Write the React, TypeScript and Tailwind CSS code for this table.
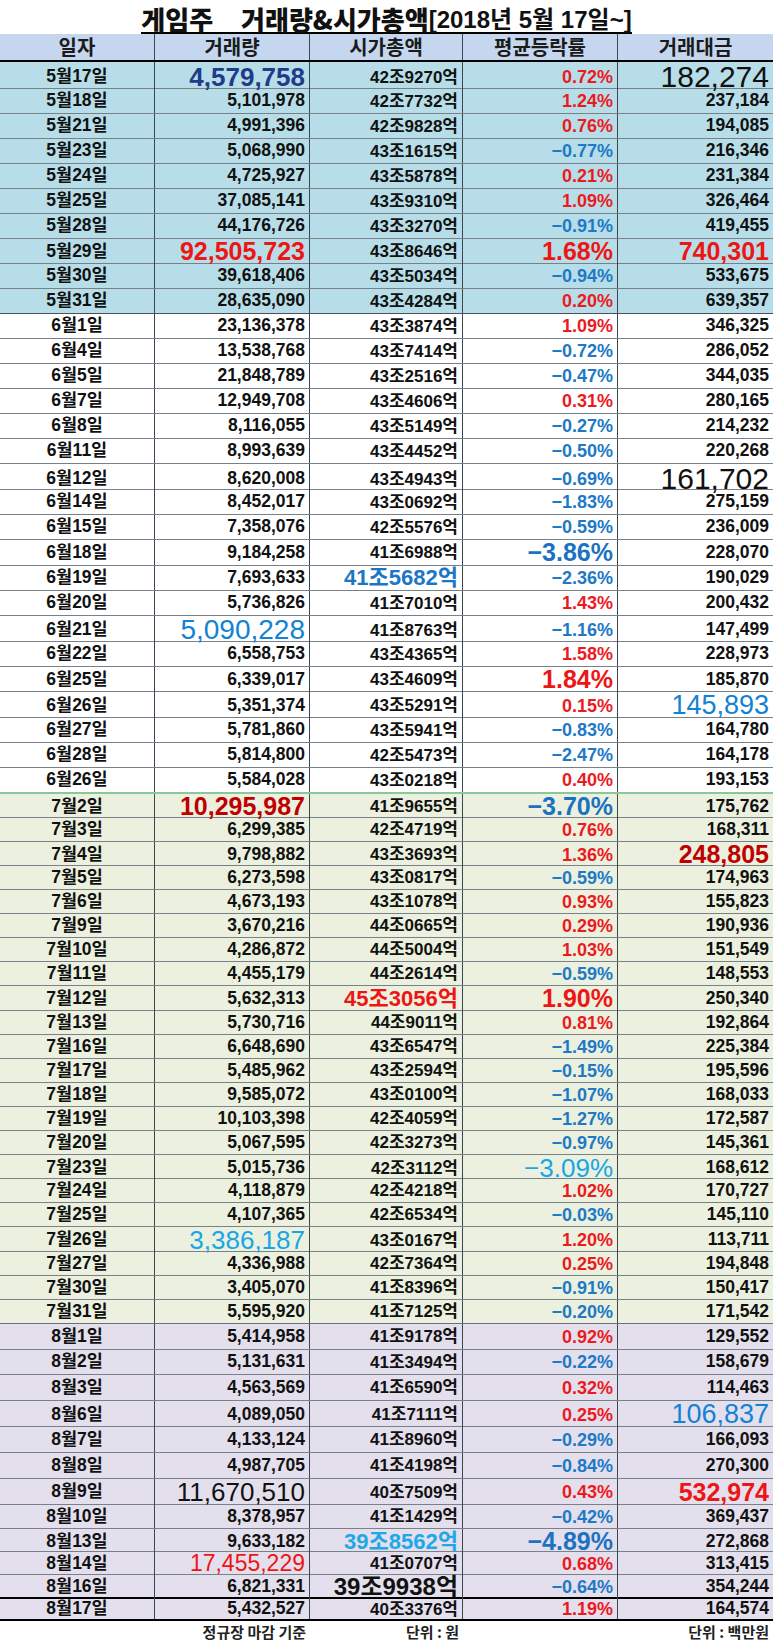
import React from 'react';

type Style = { vs?: string; cs?: string; ps?: string; as?: string };

type Row = Style & {
  d: string;
  v: string;
  c: string;
  p: string;
  a: string;
  h: number;
};

// emphasis styles
const RED = "text-[25px] font-bold text-[#ee1515]";
const DRED = "text-[25px] font-bold text-[#c00000]";
const BLUE = "text-[25px] font-bold text-[#1c72c2]";
const NAVY = "text-[26px] font-bold text-[#1f3b8a]";
const BIG_BLACK = "text-[30px] font-normal text-[#111]";
const BIG_BLUE = "text-[28px] font-normal text-[#1282d4]";
const AMT_BLUE = "text-[27px] font-normal text-[#1282d4]";
const SKY = "text-[26px] font-normal text-[#18a6e6]";
const CAP_BLUE = "text-[22px] font-bold text-[#1c76c6]";
const CAP_RED = "text-[22px] font-bold text-[#ee1515]";
const CAP_SKY = "text-[22px] font-bold text-[#1ea8e8]";
const CAP_BLACK = "text-[24px] font-bold text-[#111]";

const BASE = 'text-[17.5px] font-bold text-[#111]';

const r = (d: string, v: string, c: string, p: string, a: string, h: number, s: Style = {}): Row => ({
  d, v, c, p, a, h, ...s,
});

const may: Row[] = [
  r('5월17일', '4,579,758', '42조9270억', '0.72%', '182,274', 26, { vs: NAVY, as: BIG_BLACK }),
  r('5월18일', '5,101,978', '42조7732억', '1.24%', '237,184', 25),
  r('5월21일', '4,991,396', '42조9828억', '0.76%', '194,085', 25),
  r('5월23일', '5,068,990', '43조1615억', '-0.77%', '216,346', 25),
  r('5월24일', '4,725,927', '43조5878억', '0.21%', '231,384', 25),
  r('5월25일', '37,085,141', '43조9310억', '1.09%', '326,464', 25),
  r('5월28일', '44,176,726', '43조3270억', '-0.91%', '419,455', 25),
  r('5월29일', '92,505,723', '43조8646억', '1.68%', '740,301', 25, { vs: RED, ps: RED, as: RED }),
  r('5월30일', '39,618,406', '43조5034억', '-0.94%', '533,675', 25),
  r('5월31일', '28,635,090', '43조4284억', '0.20%', '639,357', 25),
];

const june: Row[] = [
  r('6월1일', '23,136,378', '43조3874억', '1.09%', '346,325', 25),
  r('6월4일', '13,538,768', '43조7414억', '-0.72%', '286,052', 25),
  r('6월5일', '21,848,789', '43조2516억', '-0.47%', '344,035', 25),
  r('6월7일', '12,949,708', '43조4606억', '0.31%', '280,165', 25),
  r('6월8일', '8,116,055', '43조5149억', '-0.27%', '214,232', 25),
  r('6월11일', '8,993,639', '43조4452억', '-0.50%', '220,268', 25),
  r('6월12일', '8,620,008', '43조4943억', '-0.69%', '161,702', 26, { as: BIG_BLACK }),
  r('6월14일', '8,452,017', '43조0692억', '-1.83%', '275,159', 25),
  r('6월15일', '7,358,076', '42조5576억', '-0.59%', '236,009', 25),
  r('6월18일', '9,184,258', '41조6988억', '-3.86%', '228,070', 26, { ps: BLUE }),
  r('6월19일', '7,693,633', '41조5682억', '-2.36%', '190,029', 25, { cs: CAP_BLUE }),
  r('6월20일', '5,736,826', '41조7010억', '1.43%', '200,432', 25),
  r('6월21일', '5,090,228', '41조8763억', '-1.16%', '147,499', 26, { vs: BIG_BLUE }),
  r('6월22일', '6,558,753', '43조4365억', '1.58%', '228,973', 25),
  r('6월25일', '6,339,017', '43조4609억', '1.84%', '185,870', 25, { ps: RED }),
  r('6월26일', '5,351,374', '43조5291억', '0.15%', '145,893', 26, { as: AMT_BLUE }),
  r('6월27일', '5,781,860', '43조5941억', '-0.83%', '164,780', 25),
  r('6월28일', '5,814,800', '42조5473억', '-2.47%', '164,178', 25),
  r('6월26일', '5,584,028', '43조0218억', '0.40%', '193,153', 25),
];

const july: Row[] = [
  r('7월2일', '10,295,987', '41조9655억', '-3.70%', '175,762', 25, { vs: DRED, ps: BLUE }),
  r('7월3일', '6,299,385', '42조4719억', '0.76%', '168,311', 24),
  r('7월4일', '9,798,882', '43조3693억', '1.36%', '248,805', 24, { as: DRED }),
  r('7월5일', '6,273,598', '43조0817억', '-0.59%', '174,963', 24),
  r('7월6일', '4,673,193', '43조1078억', '0.93%', '155,823', 24),
  r('7월9일', '3,670,216', '44조0665억', '0.29%', '190,936', 24),
  r('7월10일', '4,286,872', '44조5004억', '1.03%', '151,549', 24),
  r('7월11일', '4,455,179', '44조2614억', '-0.59%', '148,553', 24),
  r('7월12일', '5,632,313', '45조3056억', '1.90%', '250,340', 25, { cs: CAP_RED, ps: RED }),
  r('7월13일', '5,730,716', '44조9011억', '0.81%', '192,864', 24),
  r('7월16일', '6,648,690', '43조6547억', '-1.49%', '225,384', 24),
  r('7월17일', '5,485,962', '43조2594억', '-0.15%', '195,596', 24),
  r('7월18일', '9,585,072', '43조0100억', '-1.07%', '168,033', 24),
  r('7월19일', '10,103,398', '42조4059억', '-1.27%', '172,587', 24),
  r('7월20일', '5,067,595', '42조3273억', '-0.97%', '145,361', 24),
  r('7월23일', '5,015,736', '42조3112억', '-3.09%', '168,612', 24, { ps: SKY }),
  r('7월24일', '4,118,879', '42조4218억', '1.02%', '170,727', 24),
  r('7월25일', '4,107,365', '42조6534억', '-0.03%', '145,110', 24),
  r('7월26일', '3,386,187', '43조0167억', '1.20%', '113,711', 25, { vs: SKY }),
  r('7월27일', '4,336,988', '42조7364억', '0.25%', '194,848', 24),
  r('7월30일', '3,405,070', '41조8396억', '-0.91%', '150,417', 24),
  r('7월31일', '5,595,920', '41조7125억', '-0.20%', '171,542', 24),
];

const august: Row[] = [
  r('8월1일', '5,414,958', '41조9178억', '0.92%', '129,552', 26),
  r('8월2일', '5,131,631', '41조3494억', '-0.22%', '158,679', 25),
  r('8월3일', '4,563,569', '41조6590억', '0.32%', '114,463', 26),
  r('8월6일', '4,089,050', '41조7111억', '0.25%', '106,837', 26, { as: AMT_BLUE }),
  r('8월7일', '4,133,124', '41조8960억', '-0.29%', '166,093', 26),
  r('8월8일', '4,987,705', '41조4198억', '-0.84%', '270,300', 26),
  r('8월9일', '11,670,510', '40조7509억', '0.43%', '532,974', 26, { vs: 'text-[26px] font-normal text-[#111]', as: RED }),
  r('8월10일', '8,378,957', '41조1429억', '-0.42%', '369,437', 24),
  r('8월13일', '9,633,182', '39조8562억', '-4.89%', '272,868', 23, { cs: CAP_SKY, ps: BLUE }),
  r('8월14일', '17,455,229', '41조0707억', '0.68%', '313,415', 23, { vs: 'text-[23px] font-normal text-[#ee1515]' }),
  r('8월16일', '6,821,331', '39조9938억', '-0.64%', '354,244', 23, { cs: CAP_BLACK }),
  r('8월17일', '5,432,527', '40조3376억', '1.19%', '164,574', 24),
];

const H: Record<number, string> = {
  23: 'h-[23px]',
  24: 'h-[24px]',
  25: 'h-[25px]',
  26: 'h-[26px]',
};

const COLS = 'grid grid-cols-[155px_155px_153px_155px_155px]';

function Cell({ text, cls, center }: { text: string; cls: string; center?: boolean }) {
  return (
    <div
      className={`flex items-center overflow-visible whitespace-nowrap ${center ? 'justify-center' : 'justify-end pr-[4px]'}`}
    >
      <span className={`inline-block leading-none ${cls}`}>{text}</span>
    </div>
  );
}

function DataRow({ row, bg, border }: { row: Row; bg: string; border: string }) {
  const neg = row.p.startsWith('-');
  const pct = neg ? '−' + row.p.slice(1) : row.p;
  const pctCls = row.ps ?? (neg ? 'text-[18px] font-bold text-[#2079c6]' : 'text-[18px] font-bold text-[#ec1a1f]');
  return (
    <div className={`${COLS} ${H[row.h]} ${bg} ${border} divide-x divide-[#3d4650]`}>
      <Cell text={row.d} cls={BASE} center />
      <Cell text={row.v} cls={row.vs ?? BASE} />
      <Cell text={row.c} cls={row.cs ?? 'text-[17px] font-bold text-[#111]'} />
      <Cell text={pct} cls={pctCls} />
      <Cell text={row.a} cls={row.as ?? BASE} />
    </div>
  );
}

function Section({ rows, bg, first }: { rows: Row[]; bg: string; first: string }) {
  return (
    <>
      {rows.map((row, i) => (
        <DataRow key={row.d + i} row={row} bg={bg} border={i === 0 ? first : 'border-t border-[#7a8088]'} />
      ))}
    </>
  );
}

export default function App() {
  const augBody = august.slice(0, -1);
  const last = august[august.length - 1];

  return (
    <div className="w-[773px] h-[1644px] bg-white font-['Liberation_Sans','Noto_Sans_CJK_KR',sans-serif] text-[#111] overflow-hidden">
      {/* title */}
      <div className="h-[34px] flex justify-center items-start pt-[6px]">
        <div className="flex items-end border-b-2 border-black h-[28px]">
          <span className="text-[26px] leading-[26px] font-extrabold font-['Noto_Sans_CJK_KR',sans-serif]">게임주</span>
          <span className="ml-[28px] text-[26px] leading-[26px] font-extrabold font-['Noto_Sans_CJK_KR',sans-serif]">
            거래량&amp;시가총액
          </span>
          <span className="text-[24px] leading-[24px] font-bold">[2018년 5월 17일~]</span>
        </div>
      </div>

      {/* header */}
      <div className={`${COLS} h-[28px] bg-[#c5d7ef] border-b-2 border-black divide-x divide-[#3d4650]`}>
        {['일자', '거래량', '시가총액', '평균등락률', '거래대금'].map((t) => (
          <div
            key={t}
            className="flex items-center justify-center text-[20px] font-bold text-[#1b1b1b] leading-none font-['Noto_Sans_CJK_KR',sans-serif]"
          >
            {t}
          </div>
        ))}
      </div>

      <Section rows={may} bg="bg-[#b7dee8]" first="" />
      <Section rows={june} bg="bg-white" first="border-t border-[#4a5158]" />
      <Section rows={july} bg="bg-[#ebf1de]" first="border-t-2 border-[#8cc79a]" />
      <Section rows={augBody} bg="bg-[#e4dfec]" first="border-t border-[#6e6e78]" />
      <DataRow row={last} bg="bg-[#e4dfec]" border="border-y-2 border-black" />

      {/* footer */}
      <div className={`${COLS} h-[23px] text-[15px] font-bold text-[#222] font-['Noto_Sans_CJK_KR',sans-serif]`}>
        <div />
        <div className="flex items-center justify-end pr-[4px]">정규장 마감 기준</div>
        <div className="flex items-center justify-end pr-[4px]">단위 : 원</div>
        <div />
        <div className="flex items-center justify-end pr-[4px]">단위 : 백만원</div>
      </div>
    </div>
  );
}
